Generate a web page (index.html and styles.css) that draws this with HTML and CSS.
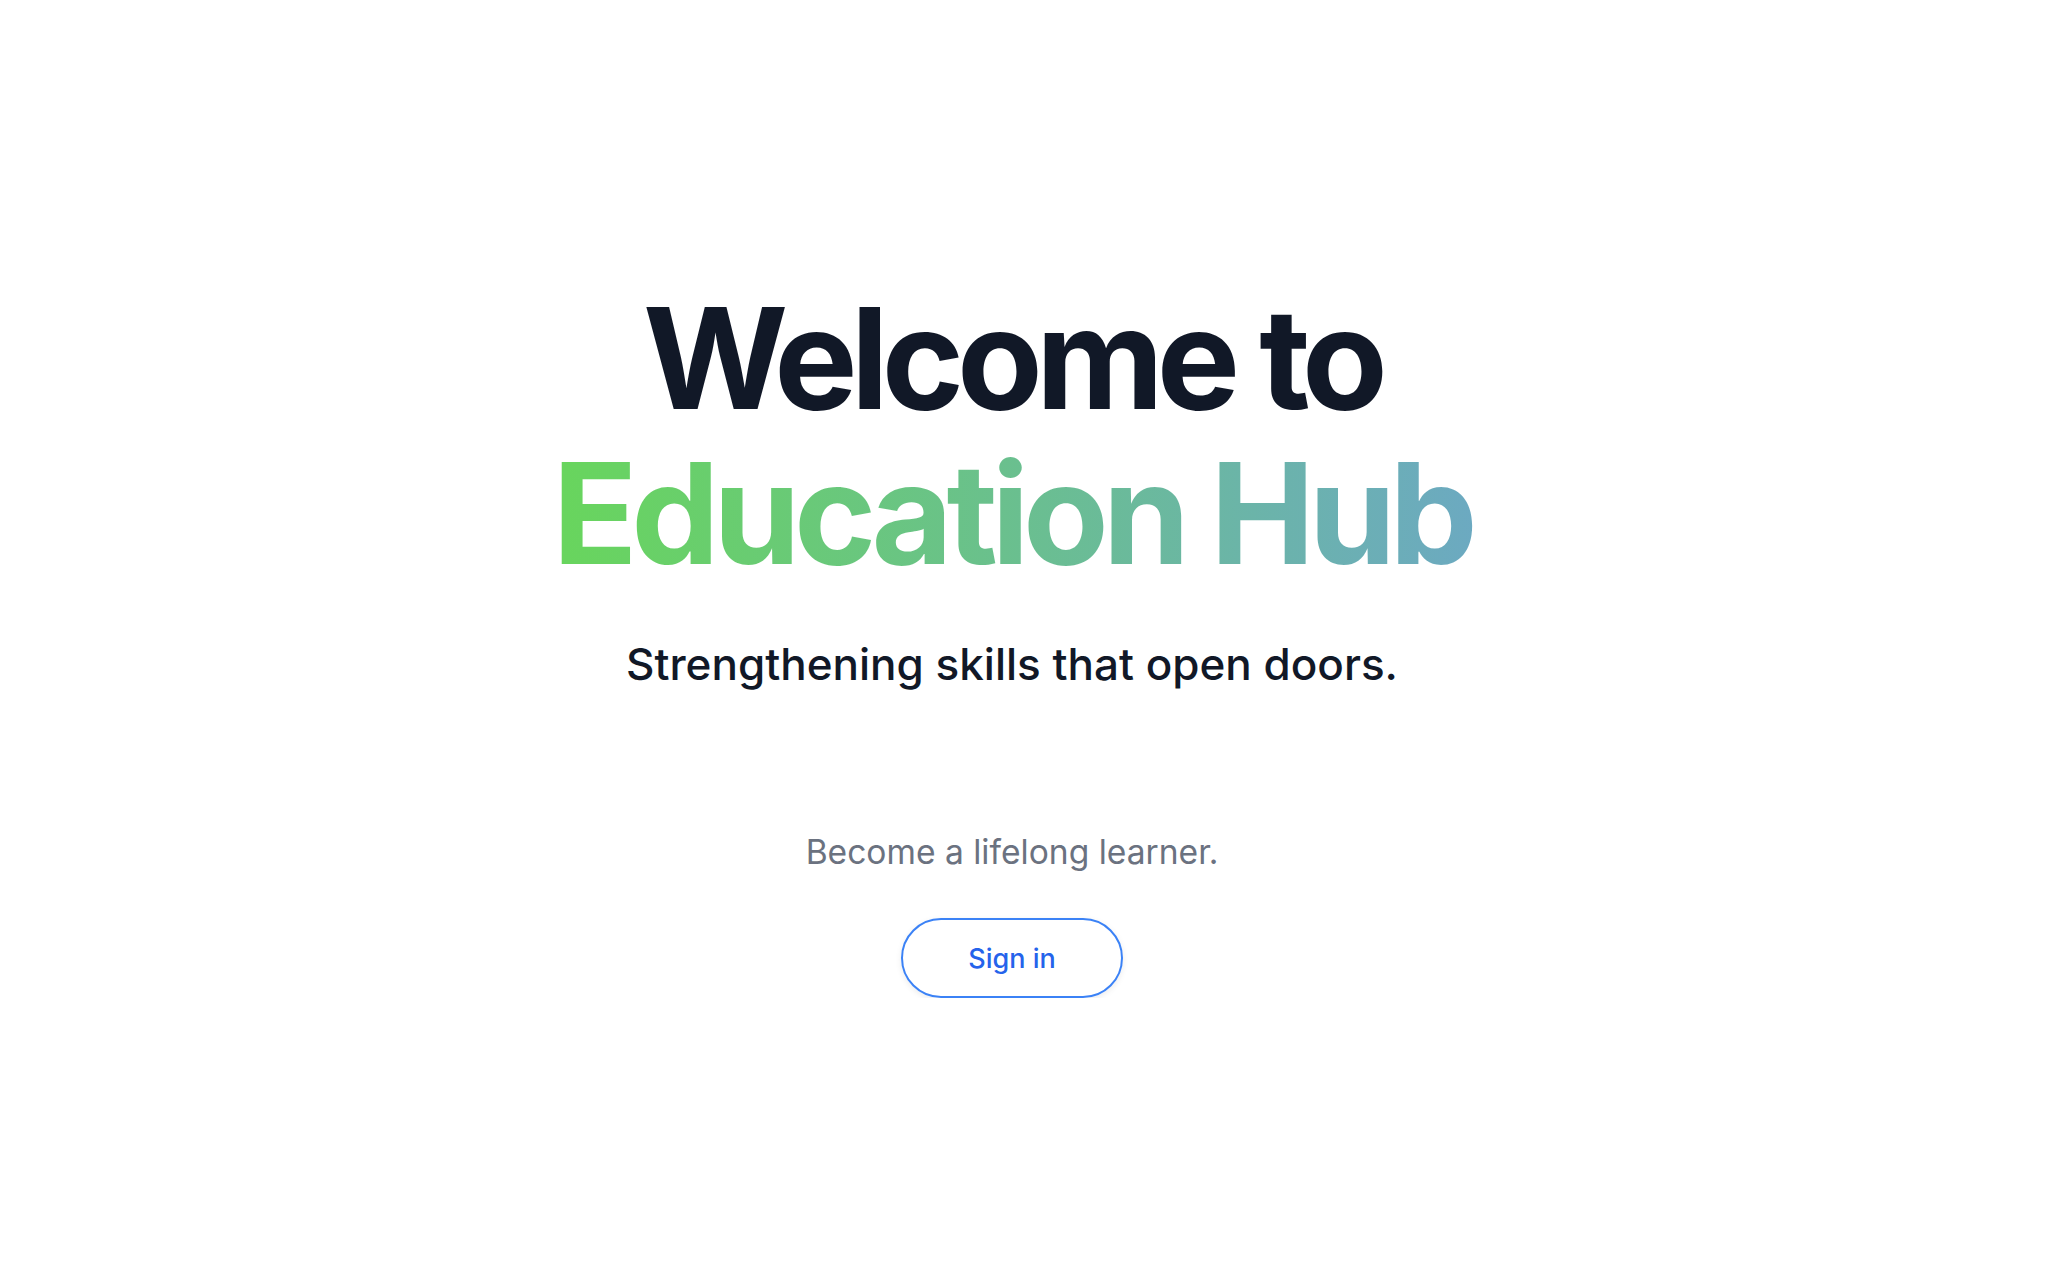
FILE: index.html
```html
<!DOCTYPE html>
<html lang="en">
<head>
<meta charset="utf-8">
<title>Education Hub</title>
<link rel="stylesheet" href="styles.css">
</head>
<body>
<main class="hero">
  <h1 class="title">
    <span class="title-line welcome">Welcome to</span>
    <span class="title-line gradient">Education Hub</span>
  </h1>
  <p class="tagline">Strengthening skills that open doors.</p>
  <p class="lead">Become a lifelong learner.</p>
  <a class="signin" href="#">Sign in</a>
</main>
</body>
</html>
```
FILE: styles.css
```css
html, body {
  margin: 0;
  padding: 0;
  background: #ffffff;
}
body {
  font-family: Inter, "Noto Sans", "Liberation Sans", sans-serif;
  color: #111827;
}
.hero {
  display: flex;
  flex-direction: column;
  align-items: center;
  padding: 281px 28px 0 0;
  text-align: center;
}
.title {
  margin: 0;
  font-size: 140px;
  line-height: 155px;
  font-weight: 700;
  letter-spacing: -0.045em;
  display: flex;
  flex-direction: column;
  align-items: center;
}
.title-line {
  display: block;
}
.welcome {
  letter-spacing: -0.05em;
}
.gradient {
  padding: 0 0.08em;
  margin: 0 -0.08em;
  background: linear-gradient(to right, #68d65b, #6ca9c2);
  -webkit-background-clip: text;
  background-clip: text;
  color: transparent;
}
.tagline {
  margin: 47px 0 0;
  font-size: 44px;
  line-height: 52px;
  font-weight: 500;
  color: #111827;
}
.lead {
  margin: 142px 0 0;
  font-size: 33.6px;
  line-height: 40px;
  color: #6b7280;
}
.signin {
  margin-top: 46px;
  box-sizing: border-box;
  width: 222px;
  height: 80px;
  border: 2px solid #3b82f6;
  border-radius: 40px;
  display: flex;
  align-items: center;
  justify-content: center;
  font-size: 27px;
  font-weight: 500;
  color: #2563eb;
  text-decoration: none;
  box-shadow: 0 2px 6px rgba(0, 0, 0, 0.08);
}
```
